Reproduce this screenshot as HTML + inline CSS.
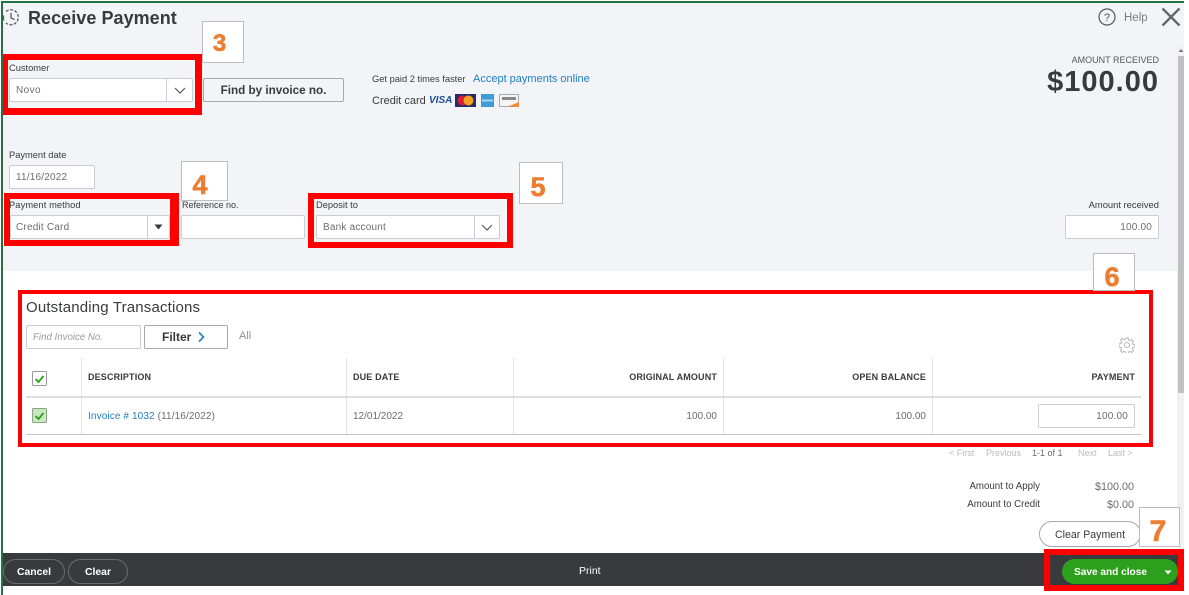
<!DOCTYPE html>
<html><head><meta charset="utf-8"><style>
html,body{margin:0;padding:0;width:1189px;height:595px;overflow:hidden;background:#fff;font-family:"Liberation Sans",sans-serif;color:#393a3d}
body{filter:blur(.3px)}
div,a{position:absolute;box-sizing:border-box;white-space:nowrap}
svg{position:absolute}
.l{font-size:9.3px;line-height:12px;color:#393a3d}
.inp{background:#fff;border:1px solid #c9ccd2;border-radius:2px;height:24px;font-size:10px;letter-spacing:.2px;line-height:23px;color:#6b6c72;padding-left:6px}
.red{border:6px solid #f00;box-sizing:border-box}
.num{background:#fff;border:1px solid #bdbdbd;color:#ed7d31;font-weight:bold;text-align:center;-webkit-text-stroke:.6px #ed7d31}
.th{font-size:9px;letter-spacing:.15px;font-weight:bold;line-height:12px;top:371px;color:#393a3d}
.td{font-size:10px;line-height:12px;top:411px;color:#6b6c72}
.v{width:1px;background:#e3e4e8}
.r{text-align:right}
</style></head><body>
<div style="left:3px;top:3px;width:1181px;height:41px;background:#f3f4f8"></div>
<div style="left:3px;top:44px;width:1174px;height:227px;background:#f3f4f8"></div>
<div style="left:1px;top:1px;width:1183px;height:2px;background:#217346"></div>
<div style="left:1px;top:1px;width:2px;height:594px;background:#217346"></div>
<div style="left:1177px;top:44px;width:7px;height:510px;background:#f1f1f1"></div>
<div style="left:1178px;top:56px;width:6px;height:337px;background:#c1c1c1"></div>
<svg style="left:1178px;top:48px" width="6" height="5" viewBox="0 0 6 5"><path d="M3 1L5.500 4H.5z" fill="#777"/></svg>

<svg style="left:3px;top:8px" width="17" height="19" viewBox="0 0 17 19" fill="none" stroke="#5a5b60" stroke-width="1.3"><path d="M3 3.500A7.500 7.500 0 1 1 3 15" stroke-dasharray="3 1.500"/><path d="M8 5v5l3.500 1.500"/><path d="M0.500 7.500v5"/></svg>
<div style="left:28px;top:7px;font-size:18px;letter-spacing:.05px;line-height:22px;font-weight:bold;color:#393a3d">Receive Payment</div>

<svg style="left:1098px;top:8px" width="18" height="18" viewBox="0 0 18 18"><circle cx="9" cy="9" r="8" fill="none" stroke="#55565b" stroke-width="1.200"/><text x="9" y="13" font-size="11" font-family="Liberation Sans" text-anchor="middle" fill="#55565b">?</text></svg>
<div style="left:1124px;top:11px;font-size:11.5px;line-height:14px;color:#7b7c80">Help</div>
<svg style="left:1161px;top:7px" width="20" height="20" viewBox="0 0 20 20"><path d="M1.500 1.500L18.500 18.500M18.500 1.500L1.500 18.500" stroke="#66676c" stroke-width="2.300" fill="none"/></svg>

<div class="r" style="left:1000px;width:159px;top:54px;font-size:9px;line-height:12px;color:#55565b">AMOUNT RECEIVED</div>
<div class="r" style="left:960px;width:199px;top:65px;font-size:29px;letter-spacing:1px;line-height:34px;font-weight:bold;color:#393a3d">$100.00</div>

<div class="red" style="left:3px;top:54px;width:199px;height:61px;border-width:6px 7px 7px 5px"></div>
<div class="l" style="left:9px;top:62px">Customer</div>
<div class="inp" style="left:9px;top:78px;width:184px;padding-left:6px;letter-spacing:.4px">Novo</div>
<div style="left:166px;top:78px;width:1px;height:24px;background:#c9ccd2"></div>
<svg style="left:173px;top:86px" width="14" height="9" viewBox="0 0 14 9"><path d="M2 2l5 5 5-5" fill="none" stroke="#55565b" stroke-width="1.200"/></svg>

<div class="num" style="left:202px;top:21px;width:42px;height:42px;line-height:44px;font-size:24px;padding-right:7px">3</div>

<div style="left:203px;top:78px;width:141px;height:24px;background:#f3f4f8;border:1px solid #a8a9ad;border-radius:2px;font-size:11.7px;font-weight:bold;line-height:23px;text-align:center;color:#393a3d">Find by invoice no.</div>

<div style="left:372px;top:73px;font-size:9.3px;line-height:12px;color:#393a3d">Get paid 2 times faster</div>
<div style="left:473px;top:73px;font-size:11px;line-height:13px;color:#1f7fbf">Accept payments online</div>
<div style="left:372px;top:94px;font-size:11px;line-height:14px;color:#393a3d">Credit card</div>
<div style="left:429px;top:95px;font-size:10px;line-height:11px;font-weight:bold;font-style:italic;color:#1a4f96">VISA</div>
<svg style="left:455px;top:94px" width="65" height="14" viewBox="0 0 65 14"><rect width="21" height="13" fill="#262b6b"/><circle cx="7.500" cy="6.500" r="5" fill="#d8202f"/><circle cx="13.500" cy="6.500" r="5" fill="#f2a023"/><rect x="26" width="13" height="13" fill="#3f9bd8"/><rect x="27" y="5.500" width="11" height="2" fill="#a8d6f0"/><rect x="44.500" y=".5" width="19" height="12" fill="#f5f5f5" stroke="#aaa"/><rect x="47" y="3" width="14" height="3" fill="#888"/><path d="M52 13l12-5v5z" fill="#ee8a3a"/></svg>

<div class="l" style="left:9px;top:149px">Payment date</div>
<div class="inp" style="left:9px;top:165px;width:86px;padding-left:6px">11/16/2022</div>

<div class="red" style="left:4px;top:193px;width:175px;height:53px;border-width:6px 9px 6px 6px"></div>
<div class="l" style="left:9px;top:199px;letter-spacing:.1px">Payment method</div>
<div class="inp" style="left:10px;top:215px;width:160px;padding-left:5px">Credit Card</div>
<div style="left:147px;top:215px;width:1px;height:24px;background:#c9ccd2"></div>
<svg style="left:154px;top:224px" width="9" height="6" viewBox="0 0 9 6"><path d="M0.500 0.500h8l-4 5z" fill="#393a3d"/></svg>

<div class="num" style="left:181px;top:161px;width:47px;height:40px;line-height:47px;font-size:27px;padding-right:9px">4</div>
<div class="l" style="left:182px;top:199px;font-size:9px">Reference no.</div>
<div class="inp" style="left:181px;top:215px;width:124px"></div>

<div class="red" style="left:308px;top:193px;width:205px;height:55px"></div>
<div class="l" style="left:316px;top:199px">Deposit to</div>
<div class="inp" style="left:316px;top:215px;width:184px">Bank account</div>
<div style="left:474px;top:215px;width:1px;height:24px;background:#c9ccd2"></div>
<svg style="left:480px;top:223px" width="14" height="9" viewBox="0 0 14 9"><path d="M2 2l5 5 5-5" fill="none" stroke="#55565b" stroke-width="1.200"/></svg>

<div class="num" style="left:519px;top:162px;width:44px;height:42px;line-height:48px;font-size:27px;padding-right:6px">5</div>

<div class="r" style="left:1000px;width:159px;top:199px;font-size:9.4px;line-height:12px;color:#393a3d">Amount received</div>
<div class="inp r" style="left:1065px;top:215px;width:94px;padding-right:6px;padding-left:0">100.00</div>

<div class="red" style="left:18px;top:290px;width:1135px;height:157px;border-width:4px"></div>
<div class="num" style="left:1093px;top:253px;width:42px;height:38px;line-height:46px;font-size:27px;padding-right:4px">6</div>

<div style="left:26px;top:299px;font-size:15px;letter-spacing:.17px;line-height:18px;color:#393a3d">Outstanding Transactions</div>
<div style="left:26px;top:325px;width:115px;height:24px;background:#fff;border:1px solid #c9ccd2;border-radius:2px;font-size:9.7px;font-style:italic;line-height:23px;padding-left:6px;color:#9a9ba0">Find Invoice No.</div>
<div style="left:144px;top:325px;width:84px;height:24px;background:#fff;border:1px solid #a8a9ad;border-radius:2px;font-size:12px;font-weight:bold;line-height:22px;padding-left:17px;color:#393a3d">Filter</div>
<svg style="left:197px;top:331px" width="9" height="12" viewBox="0 0 9 12"><path d="M2 1.500l4.500 4.500-4.500 4.500" fill="none" stroke="#1f7fbf" stroke-width="1.600"/></svg>
<div style="left:239px;top:329px;font-size:11px;line-height:14px;color:#8d8e92">All</div>

<svg style="left:1119px;top:337px" width="16" height="16" viewBox="0 0 16 16" fill="none" stroke="#b4b5ba" stroke-width="1"><circle cx="8" cy="8" r="2.500"/><path d="M6.800 1h2.400l.4 2 1.500.6 1.700-1.100 1.700 1.700-1.100 1.700.6 1.500 2 .4v2.400l-2 .4-.6 1.500 1.100 1.700-1.700 1.700-1.700-1.100-1.500.6-.4 2H6.800l-.4-2-1.500-.6-1.700 1.100-1.700-1.700 1.100-1.700-.6-1.500-2-.4V6.800l2-.4.6-1.500-1.100-1.700 1.700-1.700 1.700 1.100 1.500-.6z"/></svg>

<div class="v" style="left:81px;top:358px;height:76px"></div>
<div class="v" style="left:346px;top:358px;height:76px"></div>
<div class="v" style="left:513px;top:358px;height:76px"></div>
<div class="v" style="left:723px;top:358px;height:76px"></div>
<div class="v" style="left:932px;top:358px;height:76px"></div>
<div style="left:26px;top:396px;width:1115px;height:2px;background:#dcdde2"></div>
<div style="left:26px;top:434px;width:1115px;height:1px;background:#c4c5c9"></div>

<svg style="left:32px;top:371px" width="16" height="16" viewBox="0 0 16 16"><rect x=".5" y=".5" width="14" height="14" rx="1" fill="#fff" stroke="#999"/><path d="M3.500 8l3 3 5-6" fill="none" stroke="#2ca01c" stroke-width="1.800"/></svg>
<svg style="left:32px;top:408px" width="16" height="16" viewBox="0 0 16 16"><rect x=".5" y=".5" width="14" height="14" rx="1" fill="#c9e6c0" stroke="#8aa583"/><path d="M3.500 8l3 3 5-6" fill="none" stroke="#2ca01c" stroke-width="1.800"/></svg>

<div class="th" style="left:88px">DESCRIPTION</div>
<div class="th" style="left:353px">DUE DATE</div>
<div class="th r" style="left:560px;width:157px">ORIGINAL AMOUNT</div>
<div class="th r" style="left:770px;width:156px">OPEN BALANCE</div>
<div class="th r" style="left:980px;width:155px">PAYMENT</div>

<div class="td" style="left:88px;letter-spacing:.12px"><span style="color:#1f7fbf">Invoice # 1032</span> (11/16/2022)</div>
<div class="td" style="left:353px">12/01/2022</div>
<div class="td r" style="left:560px;width:157px">100.00</div>
<div class="td r" style="left:770px;width:156px">100.00</div>
<div class="inp r" style="left:1038px;top:404px;width:97px;padding-right:6px;padding-left:0;line-height:23px">100.00</div>

<div style="left:949px;top:447px;font-size:9px;line-height:12px;color:#b9babd">&lt; First</div>
<div style="left:986px;top:447px;font-size:9px;line-height:12px;color:#b9babd">Previous</div>
<div style="left:1032px;top:447px;font-size:9px;line-height:12px;color:#6b6c72">1-1 of 1</div>
<div style="left:1078px;top:447px;font-size:9px;line-height:12px;color:#b9babd">Next</div>
<div style="left:1108px;top:447px;font-size:9px;line-height:12px;color:#b9babd">Last &gt;</div>

<div class="r" style="left:940px;width:100px;top:481px;font-size:9.7px;line-height:12px">Amount to Apply</div>
<div class="r" style="left:1060px;width:74px;top:481px;font-size:10.8px;line-height:13px;color:#6b6c72">$100.00</div>
<div class="r" style="left:940px;width:100px;top:499px;font-size:9.7px;line-height:12px">Amount to Credit</div>
<div class="r" style="left:1060px;width:74px;top:499px;font-size:10.8px;line-height:13px;color:#6b6c72">$0.00</div>

<div style="left:1039px;top:521px;width:102px;height:26px;background:#fff;border:1px solid #a8a9ad;border-radius:13px;font-size:10.6px;line-height:26px;text-align:center;color:#393a3d">Clear Payment</div>
<div class="num" style="left:1139px;top:507px;width:41px;height:40px;line-height:47px;font-size:30px;padding-right:3px">7</div>

<div style="left:3px;top:553px;width:1176px;height:33px;background:#393a3d"></div>
<div style="left:3px;top:559px;width:62px;height:25px;border:1px solid #6b6c72;border-radius:13px;font-size:10.4px;font-weight:bold;line-height:25px;text-align:center;color:#fff">Cancel</div>
<div style="left:68px;top:559px;width:60px;height:25px;border:1px solid #6b6c72;border-radius:13px;font-size:10.4px;font-weight:bold;line-height:25px;text-align:center;color:#fff">Clear</div>
<div style="left:579px;top:565px;font-size:10.5px;line-height:13px;color:#fff">Print</div>

<div class="red" style="left:1044px;top:549px;width:140px;height:42px"></div>
<div style="left:1062px;top:559px;width:116px;height:25px;background:#2ca01c;border-radius:13px;font-size:10.1px;font-weight:bold;line-height:27px;padding-left:12px;color:#fff">Save and close</div>
<svg style="left:1164px;top:570px" width="9" height="6" viewBox="0 0 9 6"><path d="M0.500 0.500h7l-3.500 4z" fill="#fff"/></svg>
</body></html>
